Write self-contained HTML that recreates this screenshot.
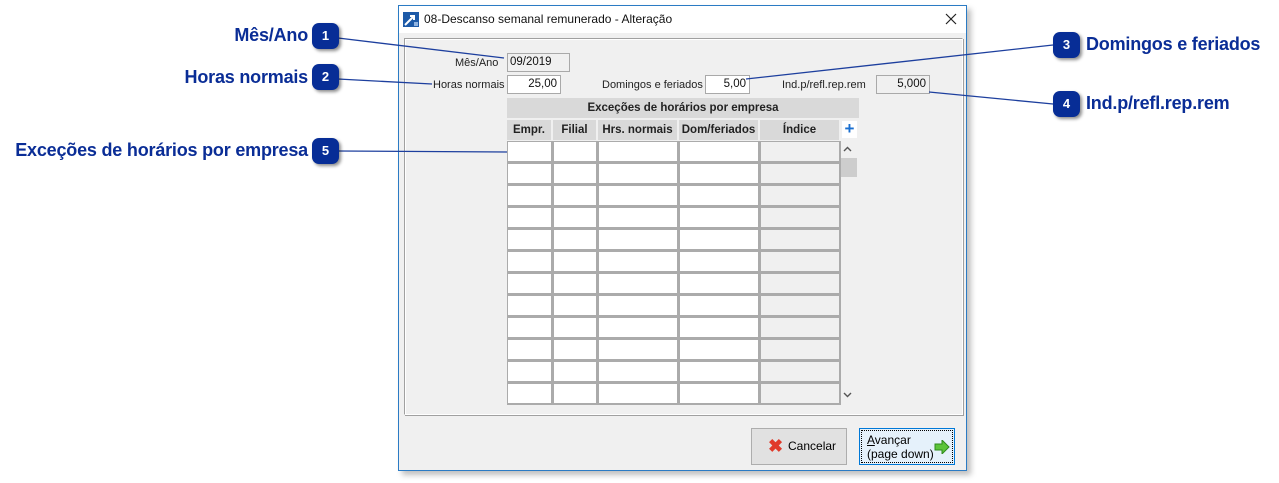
<!DOCTYPE html>
<html><head><meta charset="utf-8"><style>
body{margin:0;width:1279px;height:483px;background:#fff;position:relative;overflow:hidden;font-family:"Liberation Sans",sans-serif;}
.a{position:absolute;}
.co{position:absolute;color:#0a2d96;font-weight:bold;font-size:18px;white-space:nowrap;letter-spacing:-0.2px}
.bd{position:absolute;width:27px;height:26px;background:#072d96;border-radius:7px;color:#fff;font-weight:bold;font-size:13px;text-align:center;line-height:26px;box-shadow:2px 2px 3px rgba(0,0,0,.45);}
.lbl{position:absolute;font-size:11px;color:#222;white-space:nowrap}
.inp{position:absolute;height:19px;box-sizing:border-box;border:1px solid #a9a9a9;font-size:11.5px;line-height:17px;text-align:right;padding-right:3px;color:#111}
.grid{position:absolute;left:507px;top:141px;display:grid;grid-template-columns:46px 45px 81px 81px 81px;grid-auto-rows:22px;}
.grid div{border:1px solid #ababab;border-width:1px 2px 2px 1px;background:#fff}
.grid div.g{background:#f0f0f0}
.hd{position:absolute;top:120px;height:20px;background:#d9d9d9;font-weight:bold;font-size:11.5px;text-align:center;line-height:20px;color:#222;border-right:2px solid #f0f0f0;box-sizing:border-box}
</style></head><body>
<div class="a" style="left:402px;top:9px;width:569px;height:466px;background:rgba(0,0,0,.25);filter:blur(3px)"></div>
<div class="a" style="left:398px;top:5px;width:569px;height:466px;border:1px solid #2b7bc4;background:#f0f0f0;box-sizing:border-box">
 <div class="a" style="left:0;top:0;width:567px;height:27px;background:#fff"></div>
 <svg class="a" style="left:4px;top:6px" width="16" height="15"><rect width="16" height="15" fill="#1d5aa8"/><path d="M2 13 L11 4 M7 4 H11 V8" stroke="#fff" stroke-width="2" fill="none"/><rect x="11" y="10" width="4" height="4" fill="#8fb3e0"/></svg>
 <div class="a" style="left:25px;top:6px;font-size:12px;color:#111">08-Descanso semanal remunerado - Alteração</div>
 <svg class="a" style="left:546px;top:7px" width="12" height="12"><path d="M1 1 L11 11 M11 1 L1 11" stroke="#222" stroke-width="1.2"/></svg>
 <div class="a" style="left:5px;top:32px;width:559px;height:377px;border:1px solid #a0a0a0;border-right-color:#fff;border-bottom-color:#fff;box-shadow:1px 1px 0 #a0a0a0, inset 1px 1px 0 #fff;box-sizing:border-box"></div>
</div>
<div class="lbl" style="left:455px;top:57px">Mês/Ano</div>
<div class="inp" style="left:507px;top:53px;width:63px;text-align:left;padding-left:2px;background:#f0f0f0">09/2019</div>
<div class="lbl" style="left:433px;top:79px">Horas normais</div>
<div class="inp" style="left:507px;top:75px;width:54px;background:#fff">25,00</div>
<div class="lbl" style="left:602px;top:79px">Domingos e feriados</div>
<div class="inp" style="left:705px;top:75px;width:45px;background:#fff">5,00</div>
<div class="lbl" style="left:782px;top:79px">Ind.p/refl.rep.rem</div>
<div class="inp" style="left:876px;top:75px;width:54px;background:#f0f0f0">5,000</div>
<div class="hd" style="left:507px;top:98px;width:352px;height:20px;border:none">Exceções de horários por empresa</div>
<div class="hd" style="left:507px;width:46px">Empr.</div>
<div class="hd" style="left:553px;width:45px">Filial</div>
<div class="hd" style="left:598px;width:81px">Hrs. normais</div>
<div class="hd" style="left:679px;width:81px">Dom/feriados</div>
<div class="hd" style="left:760px;width:81px">Índice</div>
<div class="a" style="left:842px;top:121px;width:15px;height:17px;background:#fff;color:#1a6fd0;font-weight:bold;font-size:17px;line-height:16px;text-align:center">+</div>
<svg class="a" style="left:843px;top:146px" width="9" height="6"><path d="M1 5 L4.5 1.5 L8 5" stroke="#555" stroke-width="1.4" fill="none"/></svg>
<div class="a" style="left:841px;top:158px;width:16px;height:19px;background:#cdcdcd"></div>
<svg class="a" style="left:843px;top:392px" width="9" height="6"><path d="M1 1 L4.5 4.5 L8 1" stroke="#555" stroke-width="1.4" fill="none"/></svg>
<div class="grid">
<div></div><div></div><div></div><div></div><div class="g"></div>
<div></div><div></div><div></div><div></div><div class="g"></div>
<div></div><div></div><div></div><div></div><div class="g"></div>
<div></div><div></div><div></div><div></div><div class="g"></div>
<div></div><div></div><div></div><div></div><div class="g"></div>
<div></div><div></div><div></div><div></div><div class="g"></div>
<div></div><div></div><div></div><div></div><div class="g"></div>
<div></div><div></div><div></div><div></div><div class="g"></div>
<div></div><div></div><div></div><div></div><div class="g"></div>
<div></div><div></div><div></div><div></div><div class="g"></div>
<div></div><div></div><div></div><div></div><div class="g"></div>
<div></div><div></div><div></div><div></div><div class="g"></div>
</div>
<div class="a" style="left:751px;top:428px;width:96px;height:37px;box-sizing:border-box;border:1px solid #adadad;background:#e1e1e1;font-size:12px;line-height:35px">
 <span style="position:absolute;left:16px;top:0;color:#e03a2a;font-weight:bold;font-size:18px">✖</span><span style="position:absolute;left:36px">Cancelar</span></div>
<div class="a" style="left:859px;top:428px;width:96px;height:37px;box-sizing:border-box;border:1px solid #0078d7;background:#e5f1fb;font-size:12px;line-height:14px">
 <div class="a" style="left:1px;top:1px;right:1px;bottom:1px;border:1px dotted #000"></div>
 <span style="position:absolute;left:7px;top:4px"><u>A</u>vançar<br>(page down)</span>
 <svg class="a" style="left:74px;top:11px" width="16" height="14"><path d="M1 4 H8 V0 L15 7 L8 14 V10 H1 Z" fill="#5cc43a" stroke="#2e8a1c"/></svg></div>
<svg class="a" style="left:0;top:0" width="1279" height="483">
<line x1="338" y1="38" x2="504" y2="58" stroke="#1d3f9e" stroke-width="1.3"/>
<line x1="338" y1="79" x2="432" y2="84" stroke="#1d3f9e" stroke-width="1.3"/>
<line x1="338" y1="151" x2="507" y2="152" stroke="#1d3f9e" stroke-width="1.3"/>
<line x1="1053" y1="45" x2="746" y2="79" stroke="#1d3f9e" stroke-width="1.3"/>
<line x1="1053" y1="104" x2="929" y2="92" stroke="#1d3f9e" stroke-width="1.3"/>
</svg>
<div class="bd" style="left:312px;top:23px">1</div>
<div class="bd" style="left:312px;top:64px">2</div>
<div class="bd" style="left:312px;top:138px">5</div>
<div class="bd" style="left:1053px;top:32px">3</div>
<div class="bd" style="left:1053px;top:91px">4</div>
<div class="co" style="right:971px;top:25px">Mês/Ano</div>
<div class="co" style="right:971px;top:67px">Horas normais</div>
<div class="co" style="right:971px;top:140px">Exceções de horários por empresa</div>
<div class="co" style="left:1086px;top:34px">Domingos e feriados</div>
<div class="co" style="left:1086px;top:93px">Ind.p/refl.rep.rem</div>
</body></html>
